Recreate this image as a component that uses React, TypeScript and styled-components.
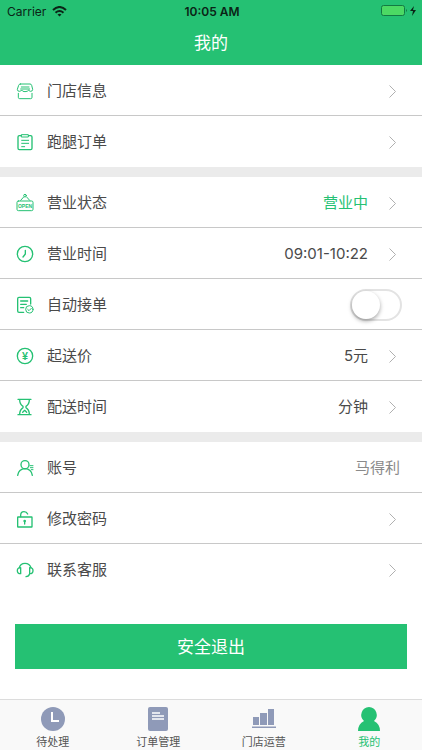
import React, { useState } from 'react';
import styled, { createGlobalStyle } from 'styled-components';

const green = '#25c173';
const tabGrey = '#8f9ab8';

const GlobalStyle = createGlobalStyle`
    * {
        box-sizing: border-box;
    }
    body {
        margin: 0;
        background-color: #fff;
        color: #4a4a4a;
        font-family: Inter, 'Noto Sans CJK SC', sans-serif;
        font-weight: 400;
    }
    button {
        border: 0;
        padding: 0;
        font: inherit;
        color: inherit;
        background: none;
        cursor: pointer;
    }
`
const Page = styled.div`
    min-height: 100vh;
    display: flex;
    flex-direction: column;
`
const Header = styled.header`
    background-color: ${green};
`
const StatusBar = styled.div`
    height: 22px;
    padding: 0 5px 0 7px;
    display: grid;
    grid-template-columns: 1fr auto 1fr;
    align-items: center;
    color: #0b2416;
    font-size: 12px;
`
const Carrier = styled.div`
    display: flex;
    align-items: center;
    gap: 6px;
`
const Time = styled.div`
    font-weight: 600;
`
const Battery = styled.div`
    display: flex;
    justify-content: flex-end;
    align-items: center;
`
const Title = styled.h1`
    margin: 0;
    height: 43px;
    line-height: 42px;
    text-align: center;
    color: #fff;
    font-size: 17px;
    font-weight: 400;
`
const Main = styled.main`
    flex: 1;
`
const Group = styled.section`
    & + & {
        border-top: 10px solid #ebebeb;
    }
`
const Row = styled.div`
    width: 100%;
    height: 51px;
    padding: 2px 20px 0 17px;
    display: flex;
    align-items: center;
    text-align: left;
    font-size: 15px;
    line-height: 20px;
    border-bottom: 1px solid #c8c8c8;

    &:last-child {
        border-bottom-color: transparent;
    }
`
const RowIcon = styled.svg`
    width: 16px;
    height: 16px;
    flex: none;
    margin-right: 14px;
    overflow: visible;
    fill: none;
    stroke: ${green};
    stroke-width: 4;
    stroke-linecap: round;
    stroke-linejoin: round;
`
const IconText = styled.text`
    fill: ${green};
    stroke: none;
    font-family: 'Liberation Sans', sans-serif;
    font-weight: 700;
    text-anchor: middle;
`
const RowLabel = styled.span`
    flex: 1;
`
const RowValue = styled.span<{ $tone?: string; $last?: boolean }>`
    margin-right: ${props => props.$last ? '2px' : '0'};
    color: ${props => props.$tone || 'inherit'};
`
const Chevron = styled.svg`
    width: 7px;
    height: 13px;
    margin: 0 6px 0 21px;
    fill: none;
    stroke: #b0b0b0;
`
const Switch = styled.input`
    appearance: none;
    width: 52px;
    height: 32px;
    margin: 0;
    border: 2px solid #e3e3e3;
    border-radius: 16px;
    background-color: #fff;
    cursor: pointer;

    &::before {
        content: '';
        display: block;
        width: 28px;
        height: 28px;
        border-radius: 50%;
        background-color: #fff;
        box-shadow: 0 2px 4px rgba(0, 0, 0, 0.35);
    }
    &:checked {
        border-color: ${green};
        background-color: ${green};
    }
    &:checked::before {
        margin-left: 20px;
    }
`
const Logout = styled.button`
    display: block;
    width: calc(100% - 30px);
    height: 45px;
    margin: 29px 15px;
    background-color: ${green};
    color: #fff;
    font-size: 17px;
    line-height: 24px;
`
const TabBar = styled.nav`
    height: 51px;
    display: flex;
    border-top: 1px solid #dcdcdc;
    background-color: #f9f9f9;
`
const Tab = styled.a<{ $active?: boolean }>`
    flex: 1;
    padding-top: 7px;
    display: flex;
    flex-direction: column;
    align-items: center;
    gap: 4px;
    text-decoration: none;
    font-size: 11px;
    line-height: 15px;
    color: ${props => props.$active ? green : '#555'};

    svg {
        width: 24px;
        height: 24px;
        fill: ${props => props.$active ? green : tabGrey};
    }
`

const icons = {
    shop: (
        <g strokeWidth="3">
            <path d="M10 3h29q4 0 5 4l3 12q0 6-6 6-5 0-6-4-3 5-11 5t-10-5q-2 4-7 4-6 0-6-6L5 7q1-4 5-4z" />
            <path d="M13 12h23M11 18h27M4 31v12q0 4 4 4h33q4 0 4-4V31" />
        </g>
    ),
    clipboard: (
        <>
            <path d="M13 5H7q-4 0-4 4v34q0 4 4 4h34q4 0 4-4V9q0-4-4-4h-6" />
            <path d="M14 2h20v7H14zM14 19h21M14 28h21M14 38h9" strokeWidth="3" />
        </>
    ),
    open: (
        <>
            <path d="M11 16L20 6M38 16L29 6" strokeWidth="3" />
            <circle cx="24" cy="2" r="4" strokeWidth="3" />
            <rect x="0" y="18" width="48" height="29" rx="4" strokeWidth="3" />
            <IconText x="24" y="38" fontSize="15">OPEN</IconText>
        </>
    ),
    clock: (
        <>
            <circle cx="24" cy="24" r="23" />
            <path d="M25 13v11l-7 9" />
        </>
    ),
    order: (
        <>
            <path d="M20 46H6q-4 0-4-4V5q0-4 4-4h31q4 0 4 4v16M11 12h21M11 22h17M11 32h9" />
            <circle cx="37" cy="37" r="11" strokeWidth="3" />
            <path d="M32 37l4 4 7-7" strokeWidth="3" />
        </>
    ),
    yuan: (
        <>
            <circle cx="24" cy="24" r="23" />
            <IconText x="24" y="35" fontSize="32">¥</IconText>
        </>
    ),
    hourglass: (
        <path d="M3 1h39M3 47h39M8 2q0 13 10 20v4Q8 33 8 46M37 2q0 13-10 20v4q10 7 10 20M17 40l6-6 6 6" />
    ),
    account: (
        <>
            <circle cx="24" cy="14" r="12" />
            <path d="M2 46q3-19 22-20 19 1 22 20" />
            <path d="M39 17h9M40 23h8M43 29h5" strokeWidth="3" />
        </>
    ),
    lock: (
        <>
            <rect x="2" y="18" width="43" height="30" rx="1" />
            <path d="M11 17V13Q11 2 21 2q8 0 11 7M23 30v9" />
            <circle cx="23" cy="30" r="2" />
        </>
    ),
    service: (
        <>
            <path d="M7 17Q10 4 24 4t18 13" />
            <path d="M11 17v18Q1 35 1 26t10-9zM38 17v18q10 0 10-9t-10-9zM38 35q-2 9-11 9" />
        </>
    )
}

interface RowItem {
    icon: keyof typeof icons;
    label: string;
    value?: string;
    tone?: string;
    kind?: 'switch' | 'static';
}

const groups: RowItem[][] = [
    [
        { icon: 'shop', label: '门店信息' },
        { icon: 'clipboard', label: '跑腿订单' }
    ],
    [
        { icon: 'open', label: '营业状态', value: '营业中', tone: green },
        { icon: 'clock', label: '营业时间', value: '09:01-10:22' },
        { icon: 'order', label: '自动接单', kind: 'switch' },
        { icon: 'yuan', label: '起送价', value: '5元' },
        { icon: 'hourglass', label: '配送时间', value: '分钟' }
    ],
    [
        { icon: 'account', label: '账号', value: '马得利', tone: '#8a8a8a', kind: 'static' },
        { icon: 'lock', label: '修改密码' },
        { icon: 'service', label: '联系客服' }
    ]
]

const tabs = [
    {
        label: '待处理',
        icon: (
            <>
                <circle cx="12" cy="12" r="12" />
                <path d="M11 5v9h7" fill="none" stroke="#fff" strokeWidth="2" />
            </>
        )
    },
    {
        label: '订单管理',
        icon: (
            <>
                <rect x="2" width="20" height="24" rx="2" />
                <path d="M6 6h8M6 9h12M6 12h12" stroke="#fff" strokeWidth="1.5" />
            </>
        )
    },
    {
        label: '门店运营',
        icon: <path d="M1 10h6v8H1zM8 6h7v12H8zM16 2h6v16h-6zM0 19.5h24V21H0z" />
    },
    {
        label: '我的',
        icon: <path d="M12 0a8 8 0 0 1 5 14q6 3 6 10H1q0-7 6-10A8 8 0 0 1 12 0z" />
    }
]

const SettingRow: React.FC<{ item: RowItem }> = ({ item }) => {
    const [checked, setChecked] = useState(false);
    const icon = <RowIcon viewBox="0 0 48 48" aria-hidden="true">{icons[item.icon]}</RowIcon>

    if (item.kind === 'switch') {
        return (
            <Row as="label">
                {icon}
                <RowLabel>{item.label}</RowLabel>
                <Switch
                    type="checkbox"
                    role="switch"
                    checked={checked}
                    onChange={e => setChecked(e.target.checked)}
                />
            </Row>
        )
    }
    if (item.kind === 'static') {
        return (
            <Row>
                {icon}
                <RowLabel>{item.label}</RowLabel>
                <RowValue $tone={item.tone} $last>{item.value}</RowValue>
            </Row>
        )
    }
    return (
        <RowButton type="button">
            {icon}
            <RowLabel>{item.label}</RowLabel>
            {item.value && <RowValue $tone={item.tone}>{item.value}</RowValue>}
            <Chevron viewBox="0 0 7 13" aria-hidden="true"><path d="M0.5 0.5l6 6-6 6" /></Chevron>
        </RowButton>
    )
}

const RowButton = styled(Row).attrs({ as: 'button' })<{ type?: string }>``

const App: React.FC = () => {
    return (
        <Page>
            <GlobalStyle />
            <Header>
                <StatusBar>
                    <Carrier>
                        Carrier
                        <svg width="15" height="11" viewBox="0 0 15 11" fill="none" stroke="#0b2416" strokeWidth="2">
                            <path d="M1 4q6.5-6 13 0M3.5 6.7q4-3.5 8 0" />
                            <path d="M5.5 8.5q2-1.500 4 0l-2 2z" fill="#0b2416" stroke="none" />
                        </svg>
                    </Carrier>
                    <Time>10:05 AM</Time>
                    <Battery>
                        <svg width="36" height="12" viewBox="0 0 36 12">
                            <rect x="0.5" y="0.5" width="23" height="10" rx="2" fill="#4cd964" stroke="#137a43" />
                            <path d="M25 4q2 1.5 0 3z" fill="#137a43" />
                            <path d="M33 1l-4 5h3l-1 5 4-6h-3z" fill="#0b2416" />
                        </svg>
                    </Battery>
                </StatusBar>
                <Title>我的</Title>
            </Header>
            <Main>
                {groups.map((items, i) => (
                    <Group key={i}>
                        {items.map(item => <SettingRow key={item.label} item={item} />)}
                    </Group>
                ))}
                <Logout type="button">安全退出</Logout>
            </Main>
            <TabBar>
                {tabs.map(tab => (
                    <Tab key={tab.label} href="#" $active={tab.label === '我的'}>
                        <svg viewBox="0 0 24 24" aria-hidden="true">{tab.icon}</svg>
                        {tab.label}
                    </Tab>
                ))}
            </TabBar>
        </Page>
    )
}

export default App;
